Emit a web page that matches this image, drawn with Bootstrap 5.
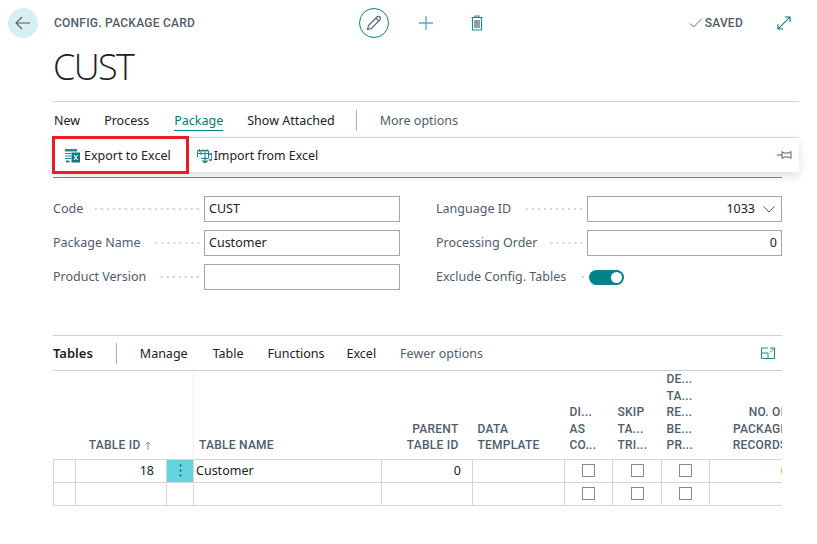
<!DOCTYPE html>
<html lang="en"><head><meta charset="utf-8"><title>Config. Package Card</title>
<link href="https://cdn.jsdelivr.net/npm/bootstrap@5.3.0/dist/css/bootstrap.min.css" rel="stylesheet">
<style>
html,body{height:100%;overflow:hidden;background:#fff}
body{font-family:"Noto Sans","Open Sans",sans-serif;font-size:12.5px;color:#212121}
svg{display:block;flex:none}
.din{font-family:Roboto,"Liberation Sans",sans-serif;font-weight:500;font-size:12px;color:#505c6d;letter-spacing:.25px}
.topbar{height:30px;margin:8px 26px 0 8px}
.backbtn{width:30px;height:30px;background:#d8eff2;border-radius:50%;margin-right:16px}
.pagekind{width:305px}
.editbtn{width:30px;height:30px;border:1px solid #008489;border-radius:50%;margin-right:29px}
.addbtn{margin-right:36px}
.savedbox{margin-left:auto;margin-right:34px;gap:2px}
.doc-title{font-family:"Open Sans",sans-serif;font-weight:300;font-size:36px;line-height:44px;margin:7px 0 0 53px;color:#212121;letter-spacing:-1.6px}
.rule-top{height:1px;background:#d0d0d0;margin:12px 18px 0 53px}
.tabsline{height:35px;margin-left:54px;margin-right:18px;padding-top:2px}
.tabitem{color:#212121;margin-right:24px;text-decoration:none;line-height:19px}
.firsttab{margin-right:25px}
.tabitem.current{color:#00797e;border-bottom:1px solid #008489}
.vsep{width:1px;height:21px;background:#a8b0ba;margin:0 23px 0 -3px}
.muted-tab{color:#505c6d}
.actionbar{height:35px;margin:0 18px 0 53px;background:#fff;border-top:1px solid #d8d8d8;box-shadow:0 4px 9px rgba(0,0,0,.13);position:relative;z-index:2;padding-left:12px;padding-top:2px}
.redbox{position:absolute;left:-1px;top:-2px;width:137px;height:38px;border:3px solid #ed1c24}
.actlabel{margin:0 26px 0 4px}
.actlabel.second{margin-left:2px;font-size:12.4px}
.pinbtn{margin-left:auto;margin-right:7px;margin-top:-2px}
.rule-dark{height:1px;background:#808488;margin:5px 35px 0 53px}
.formgrid{margin:18px 35px 0 53px;gap:36px}
.formcol{width:347px}
.formcol.rightone{width:346px}
.fieldrow{height:26px;margin-bottom:8px}
.fieldname{color:#505c6d;white-space:nowrap;margin-right:4px}
.dotfill{flex:1;height:2px;margin:0 3px 0 8px;align-self:center;background-image:radial-gradient(circle,#d0d3d7 .7px,transparent 1px);background-size:6px 2px;background-position:right center;background-repeat:repeat-x}
.boxinput{width:196px;height:26px;border:1px solid #a6a6a6;border-radius:0;padding:0 4px;font-size:12.5px;color:#212121;box-shadow:none;font-family:inherit;line-height:24px}
.rightone .boxinput{width:195px}
.selectwrap{padding-right:6px;gap:8px}
.togglepill{width:35px;height:15px;background:#008489;border-radius:8px;margin-right:158px;padding:2px;justify-content:flex-end}
.togglepill i{display:block;width:11px;height:11px;background:#fff;border-radius:50%}
.rule-tables{height:1px;background:#d0d0d0;margin:37px 35px 0 53px}
.tabsline2{height:34px;margin:0 35px 0 53px}
.tabitem.gap25{margin-right:25px}
.tabitem.gap22{margin-right:22px}
.tablehead{font-weight:600;font-size:13px;margin-right:23px;padding-top:1px}
.vsep2{width:1px;height:21px;background:#a8b0ba;margin-right:23px}
.popout{margin-left:auto;margin-right:7px}
.gridclip{margin:0 35px 0 53px;overflow:hidden;border-top:1px solid #d0d0d0}
.gridtable{table-layout:fixed;width:742px;margin:0;border-collapse:collapse;color:#212121}
.gridtable th{border:0;padding:0 5px 5px;vertical-align:bottom;line-height:16.5px;height:86px;background:transparent;color:#505c6d;white-space:nowrap}
.gridtable th.divided{border-left:1px solid #eeeeee}
.gridtable th.pad16{padding-right:16px}
.gridtable th.pad14{padding-right:14px}
.gridtable th.pad8{padding-right:8px}
.gridtable td{border:1px solid #d4d6d9;padding:0 5px;height:23px;line-height:20px;font-size:12.5px;background:#fff;vertical-align:middle}
.gridtable tbody tr{border-top:1px solid #d4d6d9}
.gridtable td.rowmenu{background:#64d5dc;padding:0}
.gridtable td.namecell{padding-left:2px;padding-top:1px}
.gridtable td.numcell{text-align:right;padding-right:11px;padding-top:1px}
.gridtable td.idcell{padding-right:12px}
.gridtable td.lastnum{padding-right:7px}
.gridtable td.boxcell{padding:0;border-right:1px solid #d4d6d9}
.tickbox{width:13px;height:13px;border:1px solid #8a8a8a;margin:0 auto}
.orange{color:#e08a3c}
</style></head><body>
<header class="topbar d-flex align-items-center">
  <div class="backbtn d-flex align-items-center justify-content-center"><svg width="18" height="18" viewBox="0 0 18 18" fill="none" stroke="#505c6d" stroke-width="1.1"><path d="M16 9H2M8 3L2 9l6 6"/></svg></div>
  <div class="pagekind din">CONFIG. PACKAGE CARD</div>
  <div class="editbtn d-flex align-items-center justify-content-center"><svg width="16" height="16" viewBox="0 0 16 16" fill="none" stroke="#505c6d" stroke-width="1.1"><path d="M1.500 14.500l1-4L11 2c.8-.8 2-.8 2.800 0s.7 2 0 2.800L5.500 13.500z"/><path d="M10 3.200l2.800 2.800"/></svg></div>
  <div class="addbtn"><svg width="16" height="16" viewBox="0 0 16 16" fill="none" stroke="#5ba4cf" stroke-width="1.3"><path d="M8 1v14M1 8h14"/></svg></div>
  <div><svg width="14" height="16" viewBox="0 0 14 16" fill="none" stroke="#1b8a94" stroke-width="1.1"><path d="M1.500 2.500h11M5 2.500V1h4v1.500M2.500 2.500v12.500h9V2.500"/><path d="M5 5v8M7 5v8M9 5v8" stroke-width="1.200" stroke="#505c6d"/></svg></div>
  <div class="savedbox d-flex align-items-center din"><svg width="14" height="12" viewBox="0 0 14 12" fill="none" stroke="#505c6d" stroke-width=".9"><path d="M1 6.500l3.500 3.500L13 1.500"/></svg><span>SAVED</span></div>
  <div><svg width="14" height="14" viewBox="0 0 15 15" fill="none" stroke="#00797e" stroke-width="1.100"><path d="M1 14L14 1M8.500 1H14v5.500M1 8.500V14h5.500"/></svg></div>
</header>
<h1 class="doc-title">CUST</h1>
<div class="rule-top"></div>
<nav class="tabsline d-flex align-items-center">
  <a class="tabitem" href="#">New</a><a class="tabitem firsttab" href="#">Process</a><a class="tabitem current" href="#">Package</a><a class="tabitem" href="#">Show Attached</a><span class="vsep"></span><a class="tabitem muted-tab" href="#">More options</a>
</nav>
<div class="actionbar d-flex align-items-center">
  <svg width="15" height="14" viewBox="0 0 15 14"><path d="M0 0h12v2.500H0z" fill="#1b8a94"/><path d="M0 4.500h6M0 7h6M0 9.500h6" stroke="#1b8a94" stroke-width="1.200"/><path d="M1 12.500h4M3 11l-2 1.500L3 14" fill="none" stroke="#1b8a94"/><path d="M6.500 3.500H15V13.500H6.500z" fill="#0f7a83"/><path d="M9 6l3.500 5M12.500 6L9 11" stroke="#fff" stroke-width="1.100"/></svg>
  <span class="actlabel">Export to Excel</span>
  <svg width="15" height="14" viewBox="0 0 15 14" fill="none" stroke="#1b8a94"><path d="M.5 1.500h11v8H4"/><path d="M.5 1.500v7" /><path d="M.5 4.500h11M4 1v5M8 1v8" stroke-width="1.100"/><path d="M2.500 0v3M6 0v3M10 0v3" stroke="#505c6d" stroke-width=".8"/><path d="M11 5h4v6h-3" stroke="#0f7a83" stroke-width="1.400"/><path d="M8 8.500v5M5.500 11.500L8 14l2.500-2.500" stroke="#0f7a83" stroke-width="1.200"/></svg>
  <span class="actlabel second">Import from Excel</span>
  <div class="pinbtn"><svg width="15" height="10" viewBox="0 0 15 10" fill="none" stroke="#505c6d" stroke-width="1"><path d="M0 5h5M5 1.500l2 1.500h5l2-1.500v7l-2-1.500H7l-2 1.500z"/></svg></div>
  <span class="redbox"></span>
</div>
<div class="rule-dark"></div>
<section class="formgrid d-flex">
  <div class="formcol">
    <div class="fieldrow d-flex align-items-center"><span class="fieldname">Code</span><span class="dotfill"></span><div class="boxinput">CUST</div></div>
    <div class="fieldrow d-flex align-items-center"><span class="fieldname">Package Name</span><span class="dotfill"></span><div class="boxinput">Customer</div></div>
    <div class="fieldrow d-flex align-items-center"><span class="fieldname">Product Version</span><span class="dotfill"></span><div class="boxinput"></div></div>
  </div>
  <div class="formcol rightone">
    <div class="fieldrow d-flex align-items-center"><span class="fieldname">Language ID</span><span class="dotfill"></span><div class="boxinput selectwrap d-flex align-items-center justify-content-end"><span>1033</span><svg width="12" height="7" viewBox="0 0 12 7" fill="none" stroke="#505c6d"><path d="M.5.500L6 6l5.500-5.500"/></svg></div></div>
    <div class="fieldrow d-flex align-items-center"><span class="fieldname">Processing Order</span><span class="dotfill"></span><div class="boxinput text-end">0</div></div>
    <div class="fieldrow d-flex align-items-center"><span class="fieldname">Exclude Config. Tables</span><span class="dotfill"></span><div class="togglepill d-flex"><i></i></div></div>
  </div>
</section>
<div class="rule-tables"></div>
<nav class="tabsline2 d-flex align-items-center">
  <span class="tablehead">Tables</span><span class="vsep2"></span><a class="tabitem gap25" href="#">Manage</a><a class="tabitem" href="#">Table</a><a class="tabitem gap22" href="#">Functions</a><a class="tabitem" href="#">Excel</a><a class="tabitem muted-tab" href="#">Fewer options</a>
  <div class="popout"><svg width="14" height="12" viewBox="0 0 14 12" fill="none" stroke="#1b8a94"><path d="M7 1H.5v10.500h13V5M.5 6H7v5.500M9 1h4.500v4M13.500 1L9 5.500"/></svg></div>
</nav>
<div class="gridclip">
<table class="table gridtable">
  <colgroup><col style="width:22px"><col style="width:91px"><col style="width:27px"><col style="width:188px"><col style="width:91px"><col style="width:92px"><col style="width:48px"><col style="width:49px"><col style="width:48px"><col style="width:86px"></colgroup>
  <thead><tr>
    <th class="din"></th>
    <th class="din text-end pad16"><span class="d-inline-flex align-items-center gap-1">TABLE ID<svg width="6" height="9" viewBox="0 0 6 9" fill="none" stroke="#8a8f96"><path d="M3 9V1M.5 3.500L3 1l2.500 2.500"/></svg></span></th>
    <th class="din"></th>
    <th class="din divided">TABLE NAME</th>
    <th class="din text-end pad14">PARENT<br>TABLE ID</th>
    <th class="din">DATA<br>TEMPLATE</th>
    <th class="din">DI...<br>AS<br>CO...</th>
    <th class="din">SKIP<br>TA...<br>TRI...</th>
    <th class="din">DE...<br>TA...<br>RE...<br>BE...<br>PR...</th>
    <th class="din text-end pad8">NO. OF<br>PACKAGE<br>RECORDS</th>
  </tr></thead>
  <tbody>
    <tr><td></td><td class="numcell idcell">18</td><td class="rowmenu"><svg class="mx-auto" width="3" height="13" viewBox="0 0 3 13" fill="#1f3a44"><circle cx="1.500" cy="1.500" r=".9"/><circle cx="1.500" cy="6.500" r=".9"/><circle cx="1.500" cy="11.500" r=".9"/></svg></td><td class="namecell">Customer</td><td class="numcell">0</td><td></td><td class="boxcell"><div class="tickbox"></div></td><td class="boxcell"><div class="tickbox"></div></td><td class="boxcell"><div class="tickbox"></div></td><td class="numcell lastnum orange">0</td></tr>
    <tr><td></td><td></td><td></td><td></td><td></td><td></td><td class="boxcell"><div class="tickbox"></div></td><td class="boxcell"><div class="tickbox"></div></td><td class="boxcell"><div class="tickbox"></div></td><td></td></tr>
  </tbody>
</table>
</div>
<script src="https://cdn.jsdelivr.net/npm/bootstrap@5.3.0/dist/js/bootstrap.bundle.min.js"></script>
</body></html>
